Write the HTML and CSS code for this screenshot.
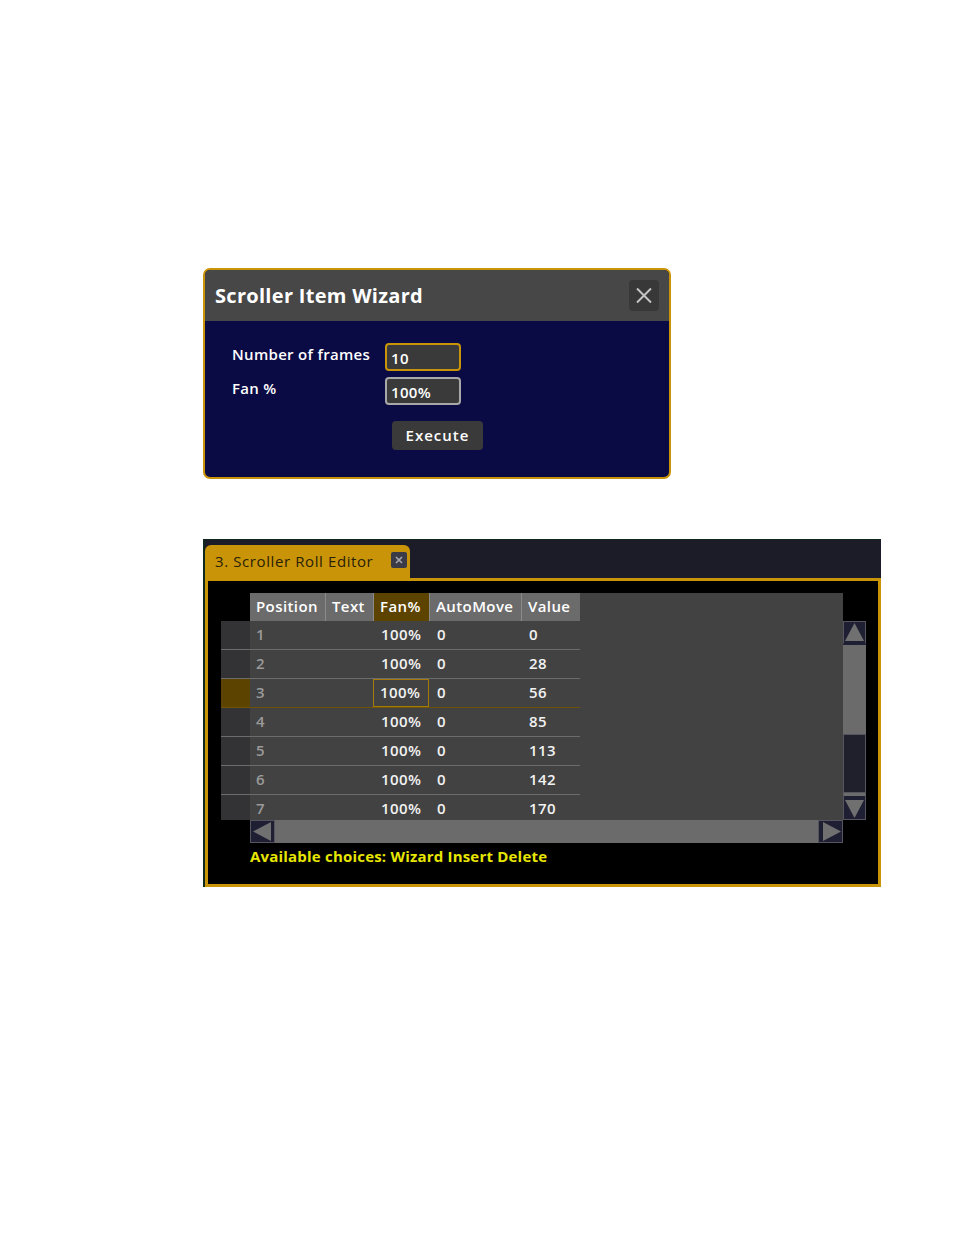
FILE: index.html
```html
<!DOCTYPE html>
<html>
<head>
<meta charset="utf-8">
<link rel="stylesheet" href="styles.css">
</head>
<body>
<div class="page">
  <div class="dialog">
    <div class="dlg-head">
      <span class="dlg-title">Scroller Item Wizard</span>
      <span class="dlg-close"><svg width="30" height="31" viewBox="0 0 30 31"><path d="M8 8.5 L22 22.5 M22 8.5 L8 22.5" stroke="#c4c4c4" stroke-width="2" fill="none"/></svg></span>
    </div>
    <div class="dlg-body">
      <div class="field"><span class="label">Number of frames</span><span class="input active">10</span></div>
      <div class="field"><span class="label">Fan %</span><span class="input">100%</span></div>
      <div class="actions"><span class="btn">Execute</span></div>
    </div>
  </div>

  <div class="editor">
    <div class="tabbar">
      <div class="tab">
        <span class="tab-title">3. Scroller Roll Editor</span>
        <span class="tab-close"><svg width="16" height="16" viewBox="0 0 16 16"><path d="M5 5 L11 11 M11 5 L5 11" stroke="#a8a8b0" stroke-width="1.6" fill="none"/></svg></span>
      </div>
    </div>
    <div class="ed-body">
      <div class="grid">
        <div class="corner"></div>
        <div class="head">
          <span class="hc c-pos">Position</span>
          <span class="hc c-text">Text</span>
          <span class="hc c-fan sel">Fan%</span>
          <span class="hc c-auto">AutoMove</span>
          <span class="hc c-val">Value</span>
        </div>
        <div class="corner"></div>
        <div class="rows">
          <div class="row"><span class="strip"></span><span class="rc c-pos num">1</span><span class="rc c-text"></span><span class="rc c-fan">100%</span><span class="rc c-auto">0</span><span class="rc c-val">0</span></div>
          <div class="row"><span class="strip"></span><span class="rc c-pos num">2</span><span class="rc c-text"></span><span class="rc c-fan">100%</span><span class="rc c-auto">0</span><span class="rc c-val">28</span></div>
          <div class="row current"><span class="strip"></span><span class="rc c-pos num">3</span><span class="rc c-text"></span><span class="rc c-fan focus">100%</span><span class="rc c-auto">0</span><span class="rc c-val">56</span></div>
          <div class="row"><span class="strip"></span><span class="rc c-pos num">4</span><span class="rc c-text"></span><span class="rc c-fan">100%</span><span class="rc c-auto">0</span><span class="rc c-val">85</span></div>
          <div class="row"><span class="strip"></span><span class="rc c-pos num">5</span><span class="rc c-text"></span><span class="rc c-fan">100%</span><span class="rc c-auto">0</span><span class="rc c-val">113</span></div>
          <div class="row"><span class="strip"></span><span class="rc c-pos num">6</span><span class="rc c-text"></span><span class="rc c-fan">100%</span><span class="rc c-auto">0</span><span class="rc c-val">142</span></div>
          <div class="row"><span class="strip"></span><span class="rc c-pos num">7</span><span class="rc c-text"></span><span class="rc c-fan">100%</span><span class="rc c-auto">0</span><span class="rc c-val">170</span></div>
        </div>
        <div class="vscroll">
          <span class="sbtn up"><svg width="23" height="24" viewBox="0 0 23 24"><polygon points="11.5,2 21,20 2,20" fill="#707070"/></svg></span>
          <span class="vtrack"></span>
          <span class="vgap"></span>
          <span class="sbtn down"><svg width="23" height="25" viewBox="0 0 23 25"><polygon points="2,5 21,5 11.5,23" fill="#707070"/></svg></span>
        </div>
        <div class="corner"></div>
        <div class="hscroll">
          <span class="hbtn left"><svg width="25" height="23" viewBox="0 0 25 23"><polygon points="21,2 21,21 3,11.5" fill="#707070"/></svg></span>
          <span class="htrack"></span>
          <span class="hbtn right"><svg width="25" height="23" viewBox="0 0 25 23"><polygon points="5,2 5,21 23,11.5" fill="#707070"/></svg></span>
        </div>
      </div>
      <div class="hint">Available choices: Wizard Insert Delete</div>
    </div>
  </div>
</div>
</body>
</html>
```

FILE: styles.css
```css
html, body {
  margin: 0;
  padding: 0;
  background: #ffffff;
}

.page {
  padding: 268px 0 0 203px;
  font-family: "Open Sans", "Noto Sans", sans-serif;
}

/* ---------- Wizard dialog ---------- */
.dialog {
  box-sizing: border-box;
  width: 468px;
  height: 211px;
  border: 2px solid #c99408;
  border-radius: 7px;
  background: #0a0a44;
  overflow: hidden;
}

.dlg-head {
  height: 51px;
  background: #474747;
  display: flex;
  align-items: center;
  justify-content: space-between;
  padding: 0 10px 0 10px;
}

.dlg-title {
  color: #ffffff;
  font-weight: 700;
  font-size: 20px;
  letter-spacing: 0.3px;
  margin-top: -1px;
}

.dlg-close {
  width: 30px;
  height: 31px;
  background: #383838;
  border-radius: 4px;
  display: flex;
}

.dlg-body {
  padding: 22px 0 0 27px;
}

.field {
  display: flex;
  align-items: flex-start;
  margin-bottom: 6px;
}

.label {
  width: 153px;
  color: #ffffff;
  font-size: 15px;
  font-weight: 600;
  letter-spacing: 0.3px;
  line-height: 20px;
  padding-top: 1px;
}

.input {
  box-sizing: border-box;
  width: 76px;
  height: 28px;
  border: 2px solid #a8a8a8;
  border-radius: 4px;
  background: #3a3a3a;
  color: #ffffff;
  font-size: 15px;
  font-weight: 600;
  letter-spacing: 0.3px;
  line-height: 24px;
  padding: 1px 0 0 4px;
}

.input.active {
  border-color: #c99408;
}

.actions {
  padding: 10px 0 0 160px;
}

.btn {
  display: inline-block;
  box-sizing: border-box;
  width: 91px;
  height: 29px;
  background: #3a3a3a;
  border-radius: 4px;
  color: #ffffff;
  font-size: 15px;
  font-weight: 600;
  letter-spacing: 1px;
  line-height: 29px;
  text-align: center;
}

/* ---------- Scroller Roll Editor ---------- */
.editor {
  margin-top: 60px;
  box-sizing: border-box;
  width: 678px;
  border-left: 2px solid #0f2a1c;
  border-top: 1px solid #0f2a1c;
}

.tabbar {
  height: 38px;
  background: #1c1c28;
  box-sizing: border-box;
  padding-top: 5px;
}

.tab {
  width: 205px;
  height: 33px;
  box-sizing: border-box;
  background: #c99408;
  border-radius: 6px 6px 0 0;
  display: flex;
  align-items: center;
  justify-content: space-between;
  padding: 0 3px 0 10px;
}

.tab-title {
  color: #2a2208;
  font-size: 15px;
  letter-spacing: 0.6px;
  margin-top: -2px;
}

.tab-close {
  width: 16px;
  height: 16px;
  background: #3b3b48;
  border-radius: 2px;
  display: flex;
  margin-top: -4px;
}

.ed-body {
  box-sizing: border-box;
  height: 309px;
  border: 3px solid #c99408;
  background: #000000;
  padding: 12px 0 0 13px;
}

.grid {
  display: grid;
  grid-template-columns: 29px 593px 23px;
  grid-template-rows: 28px 199px 23px;
}

.head {
  grid-column: 2;
  grid-row: 1;
  display: flex;
  background: #424242;
}

.hc {
  box-sizing: border-box;
  height: 28px;
  background: #6b6b6b;
  color: #ffffff;
  font-size: 15px;
  font-weight: 600;
  letter-spacing: 0.4px;
  line-height: 26px;
  padding-left: 6px;
  border-left: 1px solid #8a8a8a;
  white-space: nowrap;
}

.hc.c-pos { border-left: 0; }
.hc.sel { background: #5c4300; }

.c-pos { width: 75px; }
.c-text { width: 48px; }
.c-fan { width: 56px; }
.c-auto { width: 92px; }
.c-val { width: 59px; }

.rows {
  grid-column: 1 / 3;
  grid-row: 2;
  background: #424242;
  overflow: hidden;
}

.row {
  display: flex;
  width: 359px;
  height: 29px;
  box-sizing: border-box;
  border-bottom: 1px solid #6c6c6c;
}

.row.current {
  border-bottom-color: #6e5206;
}

.strip {
  width: 29px;
  background: #333336;
}

.row.current .strip {
  background: #5c4300;
}

.rc {
  box-sizing: border-box;
  color: #f2f2f2;
  font-size: 15px;
  font-weight: 600;
  letter-spacing: 0.4px;
  line-height: 26px;
  padding-left: 7px;
  border-left: 1px solid transparent;
  white-space: nowrap;
}

.rc.num {
  color: #9a9a9a;
  padding-left: 6px;
  border-left: 0;
}

.rc.focus {
  border: 1px solid #a57a06;
  line-height: 24px;
  padding-left: 6px;
}

.vscroll {
  grid-column: 3;
  grid-row: 2;
  display: flex;
  flex-direction: column;
}

.sbtn {
  display: flex;
  box-sizing: border-box;
  background: #1f1f33;
  border: 1px solid #555560;
}

.sbtn.up { height: 24px; border-bottom: 3px solid #1f1f33; }
.sbtn.down { height: 27px; border-top: 3px solid #6b6b6b; }

.sbtn svg { margin: -1px; }

.vtrack {
  height: 89px;
  background: #6b6b6b;
}

.vgap {
  height: 59px;
  box-sizing: border-box;
  background: #20202c;
  border: 1px solid #55555e;
}

.hscroll {
  grid-column: 2;
  grid-row: 3;
  display: flex;
  background: #6b6b6b;
}

.hbtn {
  display: flex;
  width: 25px;
  height: 23px;
  box-sizing: border-box;
  background: #1f1f33;
  border: 1px solid #555560;
}

.hbtn svg { margin: -1px; }

.htrack {
  flex: 1;
}

.hint {
  margin: 3px 0 0 29px;
  color: #e6e600;
  font-size: 15px;
  font-weight: 700;
  letter-spacing: 0.2px;
  line-height: 20px;
}
```
